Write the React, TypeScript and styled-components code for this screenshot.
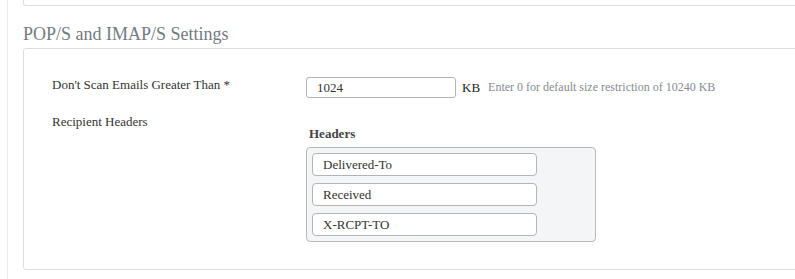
import styled, { createGlobalStyle } from "styled-components";

const GlobalStyle = createGlobalStyle`
  body {
    margin: 0;
    background: #fff;
    overflow: hidden;
    font-family: "Liberation Serif", "Times New Roman", serif;
    color: #333;
  }
`;

const Page = styled.div`
  padding-left: 7px;
  height: 279px;
`;

const Frame = styled.div`
  border-left: 1px solid #ececec;
  padding-left: 15px;
  height: 100%;
`;

const CutCard = styled.div`
  height: 5px;
  margin-right: -12px;
  border-left: 1px solid #dedede;
  border-bottom: 1px solid #dedede;
  border-bottom-left-radius: 3px;
`;

const SectionTitle = styled.h2`
  margin: 14px 0 0;
  font-size: 18px;
  font-weight: normal;
  line-height: 28px;
  color: #727b82;
`;

const Card = styled.div`
  margin-top: 0;
  margin-right: -12px;
  border: 1px solid #dedede;
  border-radius: 3px;
  padding: 28px 0 27px 28px;
`;

const Row = styled.div<{ $gap?: number }>`
  display: grid;
  grid-template-columns: 254px 1fr;
  align-items: start;
  margin-top: ${(p) => p.$gap ?? 0}px;
`;

const Label = styled.div`
  font-size: 13px;
  line-height: 15px;
  color: #333;
  padding-top: 0;
`;

const Field = styled.div`
  display: flex;
  align-items: center;
`;

const TextInput = styled.input`
  box-sizing: border-box;
  width: 150px;
  height: 21px;
  padding: 0 10px;
  border: 1px solid #b4b4b4;
  border-radius: 3px;
  font-family: inherit;
  font-size: 13px;
  color: #333;
  outline: none;
`;

const Unit = styled.span`
  margin-left: 6px;
  font-size: 13px;
  color: #222;
`;

const Hint = styled.span`
  margin-left: 8px;
  font-size: 12px;
  color: #858b90;
`;

const HeaderCol = styled.div`
  padding-top: 12px;
`;

const ColTitle = styled.div`
  margin-left: 3px;
  font-size: 13px;
  font-weight: bold;
  line-height: 15px;
  color: #444;
`;

const ListBox = styled.div`
  margin-top: 6px;
  width: 290px;
  box-sizing: border-box;
  padding: 5px 5px 5px 5px;
  background: #f4f5f7;
  border: 1px solid #b9b9b9;
  border-radius: 4px;
  display: flex;
  flex-direction: column;
  gap: 7px;
`;

const ListItem = styled.div`
  box-sizing: border-box;
  width: 225px;
  height: 23px;
  padding: 0 10px;
  display: flex;
  align-items: center;
  background: #fff;
  border: 1px solid #b4b4b4;
  border-radius: 4px;
  font-size: 13px;
  color: #333;
`;

const headers = ["Delivered-To", "Received", "X-RCPT-TO"];

function App() {
  return (
    <Page>
      <GlobalStyle />
      <Frame>
        <CutCard />
        <SectionTitle>POP/S and IMAP/S Settings</SectionTitle>
        <Card>
          <Row>
            <Label>Don't Scan Emails Greater Than *</Label>
            <Field>
              <TextInput defaultValue="1024" />
              <Unit>KB</Unit>
              <Hint>Enter 0 for default size restriction of 10240 KB</Hint>
            </Field>
          </Row>
          <Row $gap={16}>
            <Label>Recipient Headers</Label>
            <HeaderCol>
              <ColTitle>Headers</ColTitle>
              <ListBox>
                {headers.map((h) => (
                  <ListItem key={h}>{h}</ListItem>
                ))}
              </ListBox>
            </HeaderCol>
          </Row>
        </Card>
      </Frame>
    </Page>
  );
}

export default App;
